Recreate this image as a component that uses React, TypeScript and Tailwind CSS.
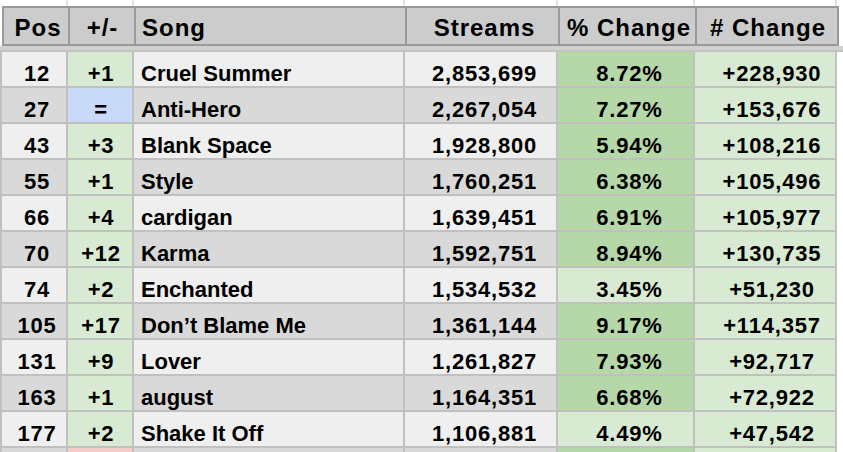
import React from 'react'

interface Row {
  pos: number
  move: string
  song: string
  streams: string
  pct: number
  diff: string
}

const rows: Row[] = [
  { pos: 12, move: '+1', song: 'Cruel Summer', streams: '2,853,699', pct: 8.72, diff: '+228,930' },
  { pos: 27, move: '=', song: 'Anti-Hero', streams: '2,267,054', pct: 7.27, diff: '+153,676' },
  { pos: 43, move: '+3', song: 'Blank Space', streams: '1,928,800', pct: 5.94, diff: '+108,216' },
  { pos: 55, move: '+1', song: 'Style', streams: '1,760,251', pct: 6.38, diff: '+105,496' },
  { pos: 66, move: '+4', song: 'cardigan', streams: '1,639,451', pct: 6.91, diff: '+105,977' },
  { pos: 70, move: '+12', song: 'Karma', streams: '1,592,751', pct: 8.94, diff: '+130,735' },
  { pos: 74, move: '+2', song: 'Enchanted', streams: '1,534,532', pct: 3.45, diff: '+51,230' },
  { pos: 105, move: '+17', song: 'Don’t Blame Me', streams: '1,361,144', pct: 9.17, diff: '+114,357' },
  { pos: 131, move: '+9', song: 'Lover', streams: '1,261,827', pct: 7.93, diff: '+92,717' },
  { pos: 163, move: '+1', song: 'august', streams: '1,164,351', pct: 6.68, diff: '+72,922' },
  { pos: 177, move: '+2', song: 'Shake It Off', streams: '1,106,881', pct: 4.49, diff: '+47,542' },
]

const cols = 'grid grid-cols-[66px_66px_271px_153px_137px_142px]'
const cell = 'border-r-2 border-b-2 border-[#c0c0c0] flex items-center pt-[9px]'

function moveBg(move: string) {
  if (move === '=') return 'bg-[#c9daf8]'
  if (move.startsWith('-')) return 'bg-[#f4cccc]'
  return 'bg-[#d9ead3]'
}

export default function App() {
  return (
    <div className="w-[843px] h-[452px] overflow-hidden bg-white text-black font-['Liberation_Sans',Arial,sans-serif] font-bold">
      {/* gridlines above header */}
      <div className={`${cols} h-[6px] ml-[2px]`}>
        <div className="border-r-2 border-[#e3e3e3]" />
        <div className="border-r-2 border-[#e3e3e3]" />
        <div className="border-r-2 border-[#e3e3e3]" />
        <div className="border-r-2 border-[#e3e3e3]" />
        <div className="border-r-2 border-[#e3e3e3]" />
        <div className="border-r-2 border-[#e3e3e3]" />
      </div>

      {/* Header */}
      <div className="w-[837px] ml-[2px] border-2 border-[#999999] bg-[#cccccc]">
        <div className="grid grid-cols-[66px_66px_271px_153px_137px_141px] h-[36px] text-[24px] tracking-[1px] leading-none">
          <div className="border-r-2 border-[#999999] flex items-center justify-center pl-[4px] pt-[3px]">Pos</div>
          <div className="border-r-2 border-[#999999] flex items-center justify-center pl-[1px] pt-[3px]">+/-</div>
          <div className="border-r-2 border-[#999999] flex items-center pl-[6px] pt-[3px]">Song</div>
          <div className="border-r-2 border-[#999999] flex items-center justify-center pl-[4px] pt-[3px]">Streams</div>
          <div className="border-r-2 border-[#999999] flex items-center justify-center pl-[3px] pt-[3px]">% Change</div>
          <div className="flex items-center justify-center pl-[1px] pt-[3px]">&#35; Change</div>
        </div>
      </div>

      {/* spacer band */}
      <div className="h-[6px] bg-[#d0d0d0] border-b-2 border-[#c4c4c4]" />

      {/* Rows */}
      <div className="border-l-2 border-[#c0c0c0] text-[22px] leading-none">
        {rows.map((r, i) => {
          const base = i % 2 === 0 ? 'bg-[#efefef]' : 'bg-[#d9d9d9]'
          const pctBg = r.pct >= 5 ? 'bg-[#b6d7a8]' : 'bg-[#d9ead3]'
          return (
            <div key={r.pos} className={`${cols} h-[36px]`}>
              <div className={`${base} ${cell} justify-center pl-[6px] tracking-[0.8px]`}>{r.pos}</div>
              <div className={`${moveBg(r.move)} ${cell} justify-center pl-[2px] tracking-[0.8px]`}>{r.move}</div>
              <div className={`${base} ${cell} pl-[7px]`}>{r.song}</div>
              <div className={`${base} ${cell} justify-center pl-[8px] tracking-[0.8px]`}>{r.streams}</div>
              <div className={`${pctBg} ${cell} justify-center pl-[8px] tracking-[0.8px]`}>{r.pct.toFixed(2)}%</div>
              <div className={`bg-[#d9ead3] ${cell} justify-center pl-[14px] tracking-[0.8px]`}>{r.diff}</div>
            </div>
          )
        })}
        {/* next row peeking in at the bottom */}
        <div className={`${cols} h-[36px]`}>
          <div className="bg-[#d9d9d9] border-r-2 border-[#c0c0c0]" />
          <div className="bg-[#f4cccc] border-r-2 border-[#c0c0c0]" />
          <div className="bg-[#d9d9d9] border-r-2 border-[#c0c0c0]" />
          <div className="bg-[#d9d9d9] border-r-2 border-[#c0c0c0]" />
          <div className="bg-[#b6d7a8] border-r-2 border-[#c0c0c0]" />
          <div className="bg-[#d9ead3] border-r-2 border-[#c0c0c0]" />
        </div>
      </div>
    </div>
  )
}
